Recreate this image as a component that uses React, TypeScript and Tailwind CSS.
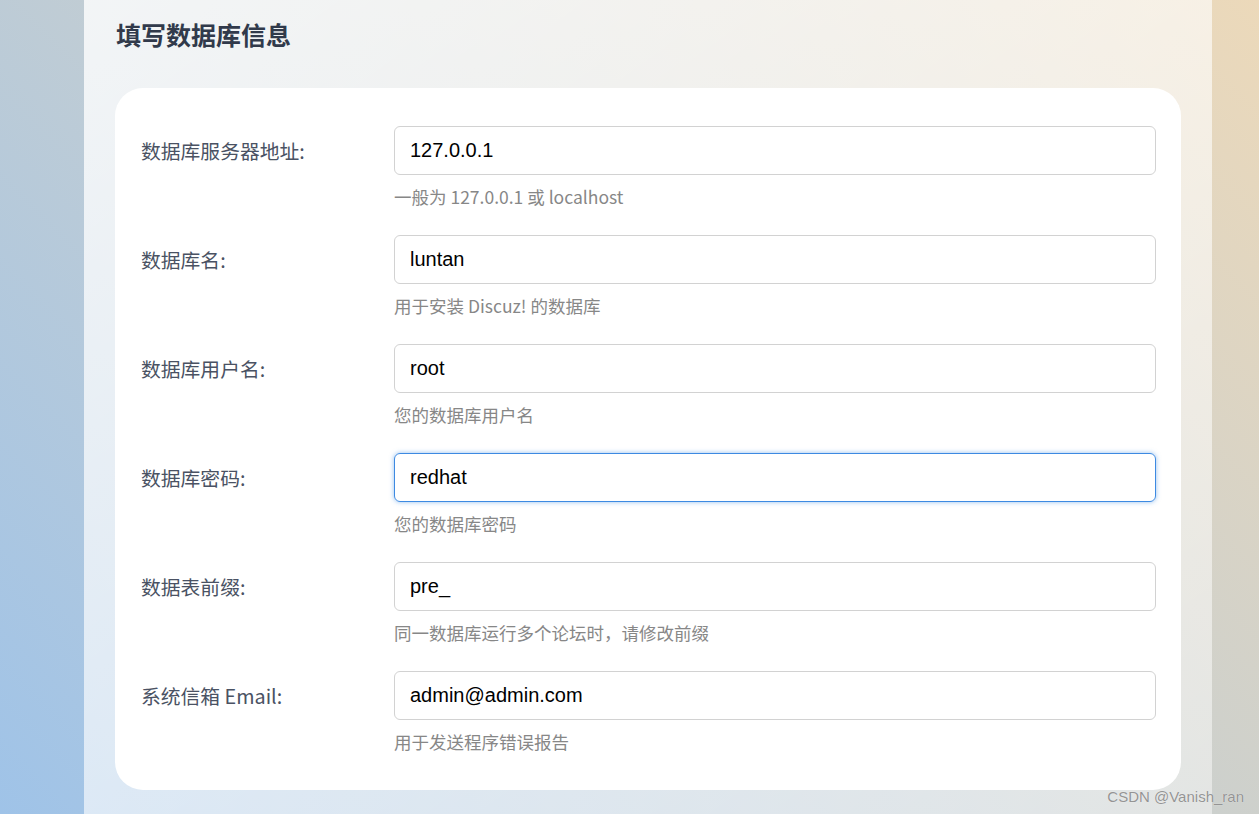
import React from "react";

const rows: { label: string; value: string; hint: string; focused?: boolean }[] = [
  { label: "数据库服务器地址:", value: "127.0.0.1", hint: "一般为 127.0.0.1 或 localhost" },
  { label: "数据库名:", value: "luntan", hint: "用于安装 Discuz! 的数据库" },
  { label: "数据库用户名:", value: "root", hint: "您的数据库用户名" },
  { label: "数据库密码:", value: "redhat", hint: "您的数据库密码", focused: true },
  { label: "数据表前缀:", value: "pre_", hint: "同一数据库运行多个论坛时，请修改前缀" },
  { label: "系统信箱 Email:", value: "admin@admin.com", hint: "用于发送程序错误报告" },
];

export default function App() {
  return (
    <div
      className="relative flex h-[814px] w-full overflow-hidden bg-[linear-gradient(45deg,#9fc3e8,#ecd9ba)]"
      style={{ fontFamily: '"Noto Sans CJK SC", "Noto Sans", sans-serif' }}
    >
      <div className="w-[84px] shrink-0" />
      <main className="w-[1128px] shrink-0 bg-[linear-gradient(to_bottom_right,rgba(255,255,255,0.8),rgba(255,255,255,0.45))] px-[31px] pt-[18px]">
        <h2 className="pl-[1px] text-[25px] font-bold leading-[32px] text-[#313a4b]">填写数据库信息</h2>
        <div className="mt-[38px] rounded-[28px] bg-white pb-[36px] pl-[26px] pr-[25px] pt-[38px]">
          {rows.map((r, i) => (
            <div key={r.label} className={`flex ${i < rows.length - 1 ? "mb-[26px]" : ""}`}>
              <div className="flex h-[49px] w-[253px] shrink-0 items-center text-[19.8px] text-[#4a5263]">
                {r.label}
              </div>
              <div className="flex-1">
                {r.focused ? (
                  <div
                    className="flex h-[49px] items-center rounded-[6px] border border-[#3d8ae2] px-[15px] pb-[1px] text-[20px] text-black shadow-[0_0_5px_rgba(61,138,226,0.55)]"
                    style={{ fontFamily: '"Liberation Sans", Arial, sans-serif' }}
                  >
                    {r.value}
                  </div>
                ) : (
                  <div
                    className="flex h-[49px] items-center rounded-[6px] border border-[#d2d2d2] px-[15px] pb-[1px] text-[20px] text-black"
                    style={{ fontFamily: '"Liberation Sans", Arial, sans-serif' }}
                  >
                    {r.value}
                  </div>
                )}
                <div className="mt-[10px] text-[17.5px] leading-[24px] text-[#878787]">{r.hint}</div>
              </div>
            </div>
          ))}
        </div>
      </main>
      <div className="flex-1" />
      <div
        className="absolute bottom-[8px] right-[15px] text-[15px] leading-[18px] text-[#949494] [text-shadow:0_0_1px_rgba(255,255,255,0.8)]"
        style={{ fontFamily: '"Liberation Sans", Arial, sans-serif' }}
      >
        CSDN @Vanish_ran
      </div>
    </div>
  );
}
